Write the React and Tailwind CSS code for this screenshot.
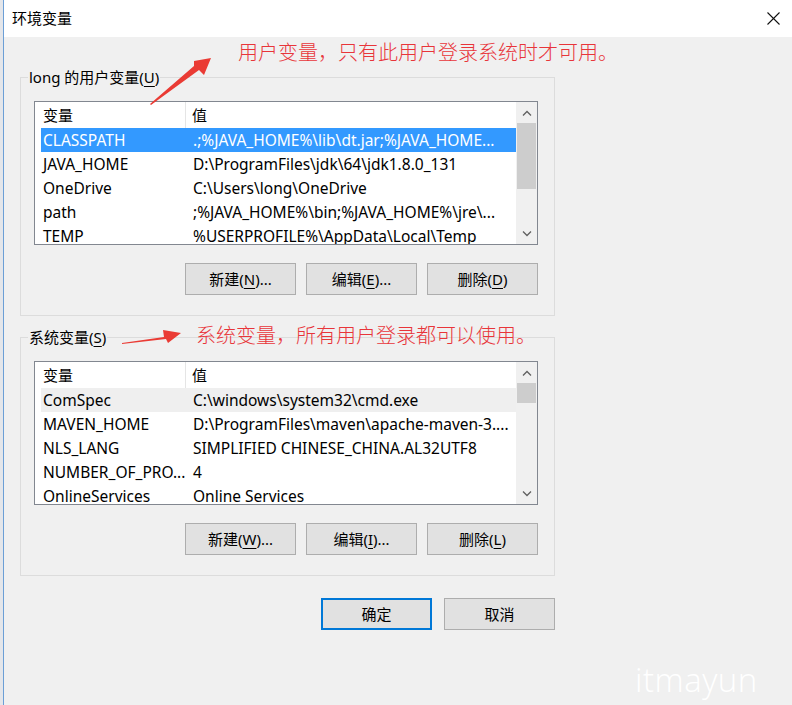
const userVars = [
  ["CLASSPATH", ".;%JAVA_HOME%\\lib\\dt.jar;%JAVA_HOME..."],
  ["JAVA_HOME", "D:\\ProgramFiles\\jdk\\64\\jdk1.8.0_131"],
  ["OneDrive", "C:\\Users\\long\\OneDrive"],
  ["path", ";%JAVA_HOME%\\bin;%JAVA_HOME%\\jre\\..."],
  ["TEMP", "%USERPROFILE%\\AppData\\Local\\Temp"],
];

const sysVars = [
  ["ComSpec", "C:\\windows\\system32\\cmd.exe"],
  ["MAVEN_HOME", "D:\\ProgramFiles\\maven\\apache-maven-3...."],
  ["NLS_LANG", "SIMPLIFIED CHINESE_CHINA.AL32UTF8"],
  ["NUMBER_OF_PRO...", "4"],
  ["OnlineServices", "Online Services"],
];

function Chevron({ up }) {
  return (
    <svg width="10" height="6" viewBox="0 0 10 6" fill="none" stroke="#606060" strokeWidth="1.3">
      {up ? <polyline points="1,5.5 5,1.5 9,5.5" /> : <polyline points="1,0.5 5,4.5 9,0.5" />}
    </svg>
  );
}

function ListView({ rows, selected, hovered, thumbHeight }) {
  return (
    <div className="ml-[13px] w-[504px] h-[144px] border border-[#828790] bg-white flex overflow-hidden">
      <div className="flex-1 flex flex-col overflow-hidden">
        <div className="h-[26px] flex items-center shrink-0">
          <div className="w-[151px] h-full pl-[8px] flex items-center border-r border-[#e5e5e5]">变量</div>
          <div className="pl-[6px]">值</div>
        </div>
        {rows.map(([name, value], i) => (
          <div
            key={name}
            className={`ml-[6px] h-[24px] pt-[2px] shrink-0 flex items-center whitespace-nowrap text-[15.5px] ${
              i === selected ? "bg-[#3399ff] text-white" : i === hovered ? "bg-[#efefef]" : ""
            }`}
          >
            <div className="w-[150px] shrink-0 pl-[2px] overflow-hidden">{name}</div>
            <div className="pl-[2px]">{value}</div>
          </div>
        ))}
      </div>
      <div className="w-[21px] shrink-0 bg-[#f0f0f0] flex flex-col">
        <div className="h-[21px] flex items-center justify-center">
          <Chevron up />
        </div>
        <div className="flex-1">
          <div className="mx-[1px] bg-[#cdcdcd]" style={{ height: thumbHeight }} />
        </div>
        <div className="h-[21px] flex items-center justify-center">
          <Chevron />
        </div>
      </div>
    </div>
  );
}

function Btn({ children, primary }) {
  return (
    <div
      className={`w-[111px] h-[32px] flex items-center justify-center bg-[#e1e1e1] ${
        primary ? "border-2 border-[#0078d7]" : "border border-[#adadad]"
      }`}
    >
      {children}
    </div>
  );
}

function Key({ k }) {
  return <span className="underline underline-offset-[3px] decoration-1">{k}</span>;
}

function Group({ label, rows, selected, hovered, thumbHeight, keys, className }) {
  return (
    <div className={`ml-[16px] w-[535px] border border-[#dcdcdc] pb-[20px] ${className}`}>
      <div className="-mt-[11px] ml-[7px] w-fit px-[1px] h-[20px] leading-[20px] bg-[#f0f0f0]">{label}</div>
      <div className="mt-[14px]">
        <ListView rows={rows} selected={selected} hovered={hovered} thumbHeight={thumbHeight} />
      </div>
      <div className="mt-[18px] mr-[16px] flex justify-end gap-[10px]">
        <Btn>新建(<Key k={keys[0]} />)...</Btn>
        <Btn>编辑(<Key k={keys[1]} />)...</Btn>
        <Btn>删除(<Key k={keys[2]} />)</Btn>
      </div>
    </div>
  );
}

export default function App() {
  return (
    <div className="relative w-[792px] h-[705px] overflow-hidden flex bg-[#f0f0f0] text-black text-[15px] font-['Segoe_UI','Noto_Sans','Noto_Sans_CJK_SC',sans-serif]">
      <div className="w-[3px] shrink-0 bg-[#e4e6ea] border-r border-[#6c9fd6] box-content" />
      <div className="flex-1 flex flex-col">
        <div className="h-[37px] bg-white flex items-center justify-between pl-[8px] pr-[12px] shrink-0">
          <span>环境变量</span>
          <svg width="13" height="13" viewBox="0 0 13 13" stroke="#111" strokeWidth="1.1">
            <line x1="0.5" y1="0.5" x2="12.5" y2="12.5" />
            <line x1="12.5" y1="0.5" x2="0.5" y2="12.5" />
          </svg>
        </div>
        <div className="pt-[40px]">
          <Group
            label={<>long 的用户变量(<Key k="U" />)</>}
            rows={userVars}
            selected={0}
            thumbHeight={66}
            keys={["N", "E", "D"]}
          />
          <Group
            className="mt-[21px]"
            label={<>系统变量(<Key k="S" />)</>}
            rows={sysVars}
            hovered={0}
            thumbHeight={20}
            keys={["W", "I", "L"]}
          />
          <div className="mt-[22px] ml-[317px] w-[234px] flex justify-between">
            <Btn primary>确定</Btn>
            <Btn>取消</Btn>
          </div>
        </div>
      </div>

      <div className="absolute left-[238px] top-[39px] text-[20px] leading-[26px] text-[#e8353a] font-['Noto_Sans_CJK_SC',sans-serif] font-light">
        用户变量，只有此用户登录系统时才可用。
      </div>
      <div className="absolute left-[196px] top-[322px] text-[20px] leading-[26px] text-[#e8353a] font-['Noto_Sans_CJK_SC',sans-serif] font-light">
        系统变量，所有用户登录都可以使用。
      </div>
      <svg className="absolute left-0 top-0 pointer-events-none" width="792" height="705">
        <polygon points="150,104 194,66 194,61 211,58 204,75 199,70 151,105" fill="#ea3b34" />
        <polygon points="122,343 164,337 163,330 181,333 168,343 166,339 122,344" fill="#ea3b34" />
      </svg>
      <div className="absolute left-[635px] top-[660px] text-[33px] leading-[40px] text-white font-['Open_Sans',sans-serif] font-light tracking-[0.5px]">
        itmayun
      </div>
    </div>
  );
}
